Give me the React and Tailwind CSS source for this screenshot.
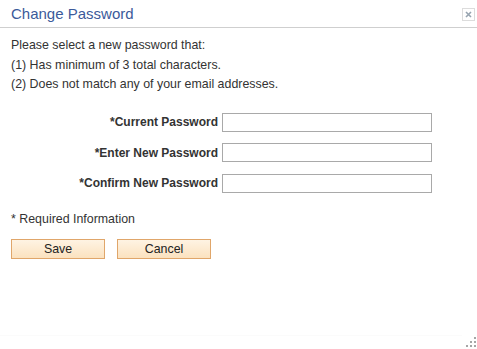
const fields = ['*Current Password', '*Enter New Password', '*Confirm New Password']

function CloseBox() {
  return (
    <div className="mt-[8px] mr-[2px] w-[13px] h-[13px] border border-[#dcdcdc] flex items-center justify-center">
      <svg width="7" height="7" viewBox="0 0 7 7">
        <path d="M1 1L6 6M6 1L1 6" stroke="#97a4b0" strokeWidth="1.6" />
      </svg>
    </div>
  )
}

function Grip() {
  const dots = [[8, 0], [4, 4], [8, 4], [0, 8], [4, 8], [8, 8]]
  return (
    <svg width="10" height="10" viewBox="0 0 10 10" className="absolute right-[1px] bottom-[2px]">
      {dots.map(([x, y]) => <rect key={`${x}-${y}`} x={x} y={y} width="2" height="2" fill="#a6a6a6" />)}
    </svg>
  )
}

export default function App() {
  return (
    <div className="relative w-[477px] h-[349px] bg-white overflow-hidden text-[#333] font-['Liberation_Sans',Arial,sans-serif]">
      <div className="flex justify-between border-b border-[#cfcfcf] h-[28px] pl-[11px]">
        <div className="text-[15px] text-[#3b5a9a] pt-[5px] leading-[18px]">Change Password</div>
        <CloseBox />
      </div>

      <div className="pl-[11px] pt-[8px] text-[12.4px] leading-[19.5px]">
        <div>Please select a new password that:</div>
        <div>(1) Has minimum of 3 total characters.</div>
        <div>(2) Does not match any of your email addresses.</div>
      </div>

      <div className="mt-[18px] flex flex-col gap-[11.5px]">
        {fields.map(f => (
          <div key={f} className="flex items-center">
            <label className="w-[218px] text-right text-[12px] font-bold">{f}</label>
            <input type="password" className="ml-[4px] w-[210px] h-[19px] border border-[#a9a9a9] bg-white outline-none" />
          </div>
        ))}
      </div>

      <div className="pl-[11px] mt-[18px] text-[12.4px] leading-[16px]">* Required Information</div>

      <div className="pl-[11px] mt-[12px] flex gap-[12px]">
        {['Save', 'Cancel'].map(b => (
          <button key={b} className="w-[94px] h-[20px] border border-[#e0a66a] bg-gradient-to-b from-[#fef3e3] to-[#fbe2bf] text-[12.4px] text-[#222] leading-[18px]">
            {b}
          </button>
        ))}
      </div>

      <div className="absolute left-0 right-[15px] top-[335px] border-t border-[#fbfbfb]" />
      <Grip />
    </div>
  )
}
